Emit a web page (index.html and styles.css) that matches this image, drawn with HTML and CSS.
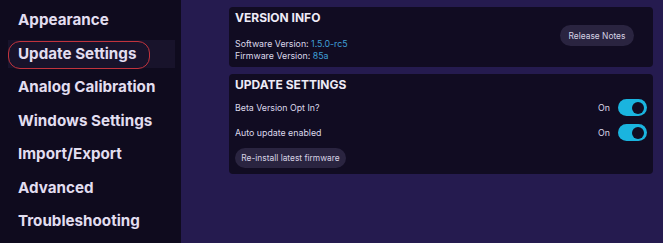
FILE: index.html
```html
<!DOCTYPE html>
<html>
<head>
<meta charset="utf-8">
<link rel="stylesheet" href="styles.css">
</head>
<body>
<div class="app">
  <nav class="sidebar">
    <div class="nav-item">Appearance</div>
    <div class="nav-item active">Update Settings<span class="ring"></span></div>
    <div class="nav-item">Analog Calibration</div>
    <div class="nav-item">Windows Settings</div>
    <div class="nav-item">Import/Export</div>
    <div class="nav-item">Advanced</div>
    <div class="nav-item">Troubleshooting</div>
  </nav>
  <main class="main">
    <section class="card card-version">
      <div class="card-left">
        <h2 class="card-title">VERSION INFO</h2>
        <div class="versions">
          <div>Software Version: <span class="val">1.5.0-rc5</span></div>
          <div>Firmware Version: <span class="val">85a</span></div>
        </div>
      </div>
      <button class="btn btn-notes">Release Notes</button>
    </section>
    <section class="card card-update">
      <h2 class="card-title">UPDATE SETTINGS</h2>
      <div class="row">
        <span class="label">Beta Version Opt In?</span>
        <span class="state">On</span>
        <span class="toggle"><span class="knob"></span></span>
      </div>
      <div class="row">
        <span class="label">Auto update enabled</span>
        <span class="state">On</span>
        <span class="toggle"><span class="knob"></span></span>
      </div>
      <button class="btn btn-reinstall">Re-install latest firmware</button>
    </section>
  </main>
</div>
</body>
</html>
```
FILE: styles.css
```css
* { box-sizing: border-box; }
html, body { margin: 0; padding: 0; }
body {
  width: 663px;
  height: 243px;
  overflow: hidden;
  font-family: Inter, "Noto Sans", sans-serif;
  background: #251b4f;
}
.app {
  display: flex;
  height: 243px;
}
.sidebar {
  width: 181px;
  flex: none;
  background: #0f0b1e;
  padding-top: 6px;
  display: flex;
  flex-direction: column;
  gap: 5.5px;
}
.nav-item {
  position: relative;
  margin: 0 6px 0 8px;
  padding: 0 10px;
  height: 28px;
  line-height: 28px;
  font-size: 15.2px;
  font-weight: 700;
  color: #e2def0;
  white-space: nowrap;
}
.nav-item.active {
  background: #18132b;
}
.ring {
  position: absolute;
  left: 0;
  top: 1px;
  width: 142px;
  height: 28px;
  border: 1.5px solid #c2333d;
  border-radius: 12px;
}
.main {
  flex: 1;
  padding: 7px 10px 0 48px;
  display: flex;
  flex-direction: column;
  gap: 7px;
}
.card {
  background: #110c22;
  border-radius: 4px;
  color: #dcd8ea;
}
.card-title {
  margin: 0;
  font-size: 12px;
  font-weight: 700;
  color: #eeebf6;
  line-height: 16px;
}
.card-version {
  height: 60px;
  padding: 3px 19px 0 6px;
  display: flex;
  justify-content: space-between;
  align-items: flex-start;
}
.versions {
  margin-top: 12px;
  font-size: 8.8px;
  line-height: 12px;
}
.val { color: #3f9fd6; }
.btn {
  border: none;
  font-family: inherit;
  background: #2a2440;
  color: #d6d2e4;
  font-size: 8.4px;
  border-radius: 11px;
  padding: 0;
  height: 21px;
  white-space: nowrap;
}
.btn-notes {
  width: 74px;
  margin-top: 15px;
}
.card-update {
  height: 100px;
  padding: 3px 6px 0 6px;
}
.row {
  display: flex;
  align-items: center;
  height: 17px;
  margin-top: 6px;
  font-size: 8.8px;
}
.row + .row { margin-top: 8px; }
.label { flex: 1; }
.state {
  margin-right: 8px;
  font-size: 8.8px;
}
.toggle {
  width: 29px;
  height: 17px;
  border-radius: 9px;
  background: #1ab4df;
  position: relative;
  flex: none;
}
.knob {
  position: absolute;
  right: 3px;
  top: 2.5px;
  width: 12px;
  height: 12px;
  border-radius: 50%;
  background: #110c22;
}
.btn-reinstall {
  margin-top: 7px;
  width: 111px;
  height: 20px;
  border-radius: 10px;
}
```
